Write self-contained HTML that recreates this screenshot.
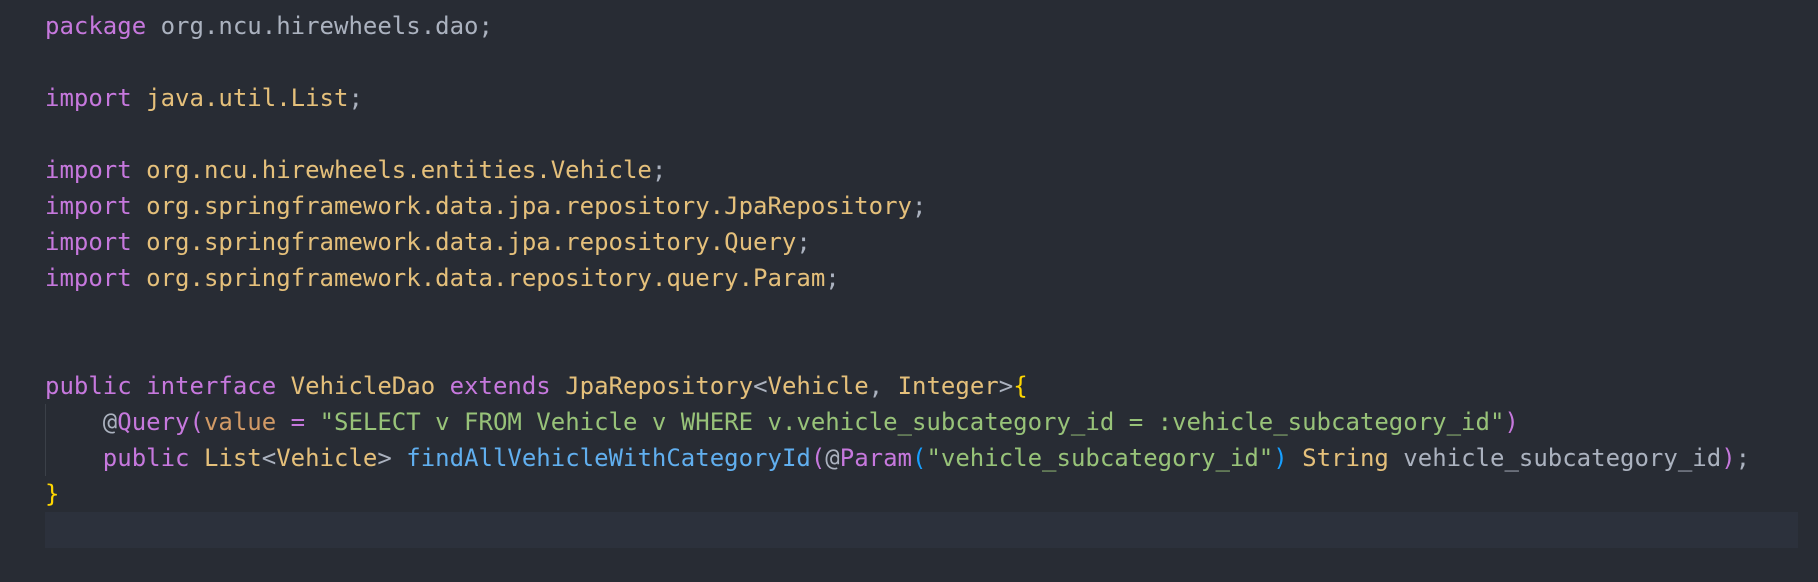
<!DOCTYPE html>
<html><head><meta charset="utf-8"><style>
html,body{margin:0;padding:0;background:#282c34;width:1818px;height:582px;overflow:hidden}
#c{position:absolute;left:45px;top:7.5px;font-family:"DejaVu Sans Mono","Liberation Mono",monospace;font-size:24px;line-height:36px;color:#abb2bf;white-space:pre}
.hl{position:absolute;left:45px;top:511.5px;width:1753px;height:36px;background:#2c313c}
.guide{position:absolute;left:45px;top:403.5px;width:1px;height:72px;background:#3b4048}
.k{color:#c678dd}.y{color:#e5c07b}.g{color:#98c379}.o{color:#d19a66}.b{color:#61afef}.gold{color:#ffd700}.bb{color:#179fff}
</style></head><body>
<div class="hl"></div><div class="guide"></div>
<div id="c"><span class="k">package</span> org.ncu.hirewheels.dao;

<span class="k">import</span> <span class="y">java.util.List</span>;

<span class="k">import</span> <span class="y">org.ncu.hirewheels.entities.Vehicle</span>;
<span class="k">import</span> <span class="y">org.springframework.data.jpa.repository.JpaRepository</span>;
<span class="k">import</span> <span class="y">org.springframework.data.jpa.repository.Query</span>;
<span class="k">import</span> <span class="y">org.springframework.data.repository.query.Param</span>;


<span class="k">public</span> <span class="k">interface</span> <span class="y">VehicleDao</span> <span class="k">extends</span> <span class="y">JpaRepository</span>&lt;<span class="y">Vehicle</span>, <span class="y">Integer</span>&gt;<span class="gold">{</span>
    @<span class="k">Query</span><span class="k">(</span><span class="o">value</span> <span class="k">=</span> <span class="g">"SELECT v FROM Vehicle v WHERE v.vehicle_subcategory_id = :vehicle_subcategory_id"</span><span class="k">)</span>
    <span class="k">public</span> <span class="y">List</span>&lt;<span class="y">Vehicle</span>&gt; <span class="b">findAllVehicleWithCategoryId</span><span class="k">(</span>@<span class="k">Param</span><span class="bb">(</span><span class="g">"vehicle_subcategory_id"</span><span class="bb">)</span> <span class="y">String</span> vehicle_subcategory_id<span class="k">)</span>;
<span class="gold">}</span>
</div>
</body></html>
